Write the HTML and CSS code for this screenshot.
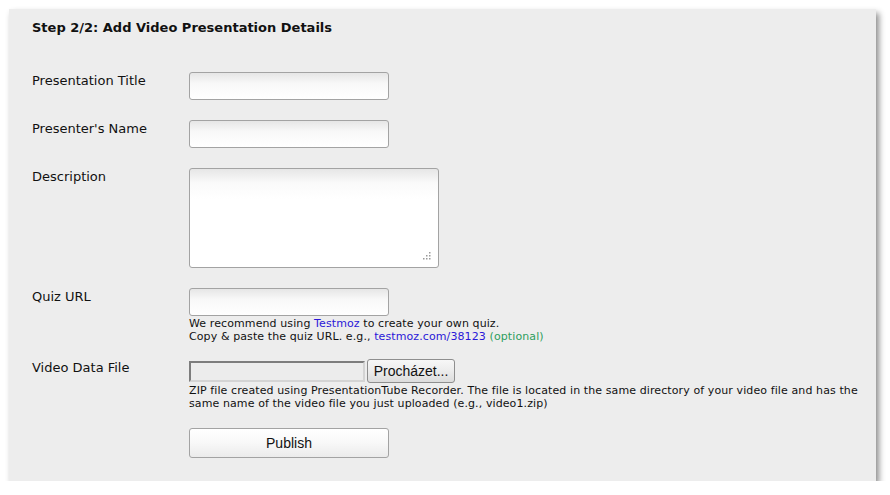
FILE: index.html
```html
<!DOCTYPE html>
<html lang="en">
<head>
    <meta charset="UTF-8">
    <meta name="viewport" content="width=device-width, initial-scale=1.0">
    <title>Add Video Presentation Details</title>
    <link rel="stylesheet" href="styles.css">
</head>
<body>
    <div class="panel">
        <h2>Step 2/2: Add Video Presentation Details</h2>

        <form class="details-form">
            <div class="row">
                <label for="title">Presentation Title</label>
                <div class="field">
                    <input type="text" id="title">
                </div>
            </div>
            <div class="row">
                <label for="presenter">Presenter's Name</label>
                <div class="field">
                    <input type="text" id="presenter">
                </div>
            </div>
            <div class="row">
                <label for="description">Description</label>
                <div class="field">
                    <div class="textarea-wrap">
                        <textarea id="description"></textarea>
                        <!-- grip like the old resize handle -->
                        <svg class="grip" width="9" height="9" viewBox="0 0 9 9">
                            <rect x="7" y="1" width="1.5" height="1.5" fill="#9a9a9a"/>
                            <rect x="4" y="4" width="1.5" height="1.5" fill="#9a9a9a"/>
                            <rect x="7" y="4" width="1.5" height="1.5" fill="#9a9a9a"/>
                            <rect x="1" y="7" width="1.5" height="1.5" fill="#9a9a9a"/>
                            <rect x="4" y="7" width="1.5" height="1.5" fill="#9a9a9a"/>
                            <rect x="7" y="7" width="1.5" height="1.5" fill="#9a9a9a"/>
                        </svg>
                    </div>
                </div>
            </div>
            <div class="row quiz-row">
                <label for="quiz">Quiz URL</label>
                <div class="field">
                    <input type="text" id="quiz">
                    <p class="help">
                        We recommend using <a href="#">Testmoz</a> to create your own quiz.<br>
                        Copy &amp; paste the quiz URL. e.g., <a href="#">testmoz.com/38123</a> <span class="optional">(optional)</span>
                    </p>
                </div>
            </div>
            <div class="row file-row">
                <label for="datafile">Video Data File</label>
                <div class="field">
                    <div class="file-field">
                        <span class="file-name" id="datafile"></span>
                        <button type="button" class="browse">Procházet...</button>
                    </div>
                    <p class="help">ZIP file created using PresentationTube Recorder. The file is located in the same directory of your video file and has the same name of the video file you just uploaded (e.g., video1.zip)</p>
                </div>
            </div>
            <div class="row last">
                <span class="spacer"></span>
                <div class="field">
                    <button type="submit" class="publish">Publish</button>
                </div>
            </div>
        </form>
    </div>
</body>
</html>
```

FILE: styles.css
```css
/* Estilos */
body {
    margin: 0;
    padding: 0;
    background-color: #fff;
    font-family: "DejaVu Sans", Verdana, sans-serif;
    color: #111;
}

.panel {
    width: 867px;
    margin: 9px 0 0 9px;
    padding: 11px 0 23px 23px;
    box-sizing: border-box;
    background-color: #ededed;
    box-shadow: 3px 4px 6px rgba(0, 0, 0, 0.45);
}

h2 {
    margin: 0 0 36px 0;
    font-size: 13px;
    line-height: 16px;
    font-weight: bold;
    color: #111;
}

.row {
    display: flex;
    margin-bottom: 20px;
}

.row.quiz-row {
    margin-bottom: 16px;
}

.row.file-row {
    margin-bottom: 18px;
}

.row.last {
    margin-bottom: 0;
}

.row label, .spacer {
    flex: 0 0 157px;
    font-size: 13px;
    line-height: 16px;
    padding-top: 1px;
}

.field {
    flex: 1;
    padding-right: 14px;
}

input[type="text"], textarea {
    display: block;
    width: 200px;
    height: 28px;
    margin: 0;
    padding: 3px 5px;
    box-sizing: border-box;
    border: 1px solid #a3a3a3;
    border-radius: 3px;
    background: linear-gradient(to bottom, #e6e6e6 0%, #f8f8f8 40%, #fff 100%);
    font-family: inherit;
    font-size: 12px;
}

.textarea-wrap {
    position: relative;
    width: 250px;
}

textarea {
    width: 250px;
    height: 100px;
    resize: none;
    background: linear-gradient(to bottom, #e6e6e6 0px, #fafafa 14px, #fff 30px);
}

.grip {
    position: absolute;
    right: 8px;
    bottom: 8px;
}

.help {
    margin: 1px 0 0 0;
    font-size: 11px;
    line-height: 13px;
    letter-spacing: 0.1px;
    color: #111;
}

.help a {
    color: #2a17d8;
    text-decoration: none;
}

.optional {
    color: #2e9e5e;
}

.file-field {
    display: flex;
    align-items: center;
    gap: 2px;
    height: 24px;
}

.file-name {
    width: 176px;
    height: 21px;
    box-sizing: border-box;
    border: 2px solid #7d7d7d;
    border-right-color: #d4d4d4;
    border-bottom-color: #d4d4d4;
    background-color: #ececec;
}

.browse, .publish {
    font-family: "Liberation Sans", Arial, sans-serif;
    color: #111;
    cursor: pointer;
    border: 1px solid #8e8e8e;
    border-radius: 3px;
    background: linear-gradient(to bottom, #f7f7f7 0%, #ececec 50%, #dcdcdc 100%);
}

.browse {
    width: 88px;
    height: 24px;
    padding: 0;
    font-size: 14px;
}

.publish {
    display: block;
    width: 200px;
    height: 30px;
    margin-top: 0;
    border-color: #a3a3a3;
    background: linear-gradient(to bottom, #fff 0%, #f8f8f8 50%, #ebebeb 100%);
    font-size: 14px;
}
```
